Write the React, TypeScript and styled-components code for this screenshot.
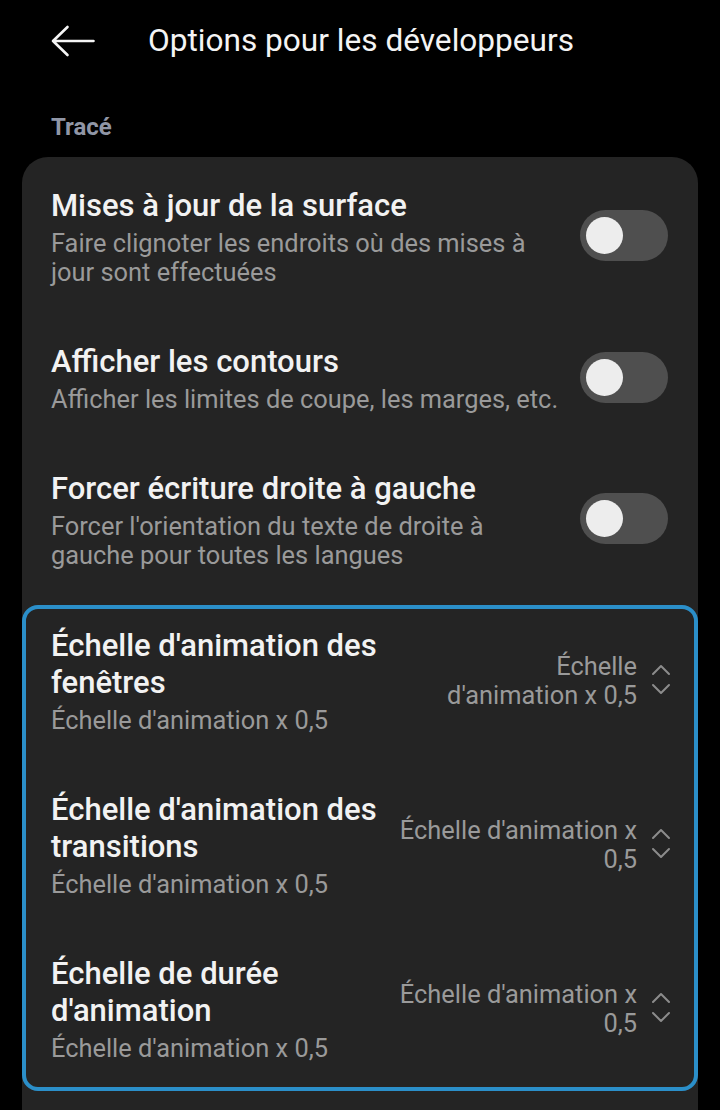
import styled, { createGlobalStyle } from 'styled-components';

const GlobalStyle = createGlobalStyle`
	html, body {
		margin: 0;
		padding: 0;
		background: #000;
		font-family: Roboto, 'Noto Sans', 'Liberation Sans', sans-serif;
		-webkit-font-smoothing: antialiased;
	}
	body {
		overflow: hidden;
	}
`;

type SwitchRow = {
	title: string;
	summary: string[];
};

type ListRow = {
	title: string[];
	summary: string;
	value: string[];
};

const switchRows: SwitchRow[] = [
	{
		title: 'Mises à jour de la surface',
		summary: ['Faire clignoter les endroits où des mises à', 'jour sont effectuées'],
	},
	{
		title: 'Afficher les contours',
		summary: ['Afficher les limites de coupe, les marges, etc.'],
	},
	{
		title: 'Forcer écriture droite à gauche',
		summary: ["Forcer l'orientation du texte de droite à", 'gauche pour toutes les langues'],
	},
];

const listRows: ListRow[] = [
	{
		title: ["Échelle d'animation des", 'fenêtres'],
		summary: "Échelle d'animation x 0,5",
		value: ['Échelle', "d'animation x 0,5"],
	},
	{
		title: ["Échelle d'animation des", 'transitions'],
		summary: "Échelle d'animation x 0,5",
		value: ["Échelle d'animation x", '0,5'],
	},
	{
		title: ['Échelle de durée', "d'animation"],
		summary: "Échelle d'animation x 0,5",
		value: ["Échelle d'animation x", '0,5'],
	},
];

const Lines = ({ lines }: { lines: string[] }) => (
	<>
		{lines.map((l, i) => (
			<span key={i}>
				{l}
				{i < lines.length - 1 && <br />}
			</span>
		))}
	</>
);

const BackArrow = () => (
	<svg width='44' height='32' viewBox='0 0 44 32' fill='none'>
		<path
			d='M2 16 H42.5 M16.5 2 L2 16 L16.5 30'
			stroke='#f4f4f4'
			strokeWidth='2.6'
			strokeLinecap='round'
			strokeLinejoin='round'
		/>
	</svg>
);

const Chevrons = () => (
	<svg width='20' height='34' viewBox='0 0 20 34' fill='none'>
		<path
			d='M2 11 L10 3 L18 11 M2 22 L10 30 L18 22'
			stroke='#8c8c8c'
			strokeWidth='2'
			strokeLinecap='round'
			strokeLinejoin='round'
		/>
	</svg>
);

const App = () => {
	return (
		<>
			<GlobalStyle />
			<Page>
				<Header>
					<BackButton>
						<BackArrow />
					</BackButton>
					<HeaderTitle>Options pour les développeurs</HeaderTitle>
				</Header>
				<SectionLabel>Tracé</SectionLabel>
				<Card>
					{switchRows.map((r) => (
						<Row key={r.title}>
							<TextColumn>
								<Title>{r.title}</Title>
								<Summary>
									<Lines lines={r.summary} />
								</Summary>
							</TextColumn>
							<Toggle>
								<Knob />
							</Toggle>
						</Row>
					))}
					<FocusGroup>
						{listRows.map((r, i) => (
							<GroupRow key={i} first={i === 0} last={i === listRows.length - 1}>
								<TextColumn>
									<Title>
										<Lines lines={r.title} />
									</Title>
									<Summary>{r.summary}</Summary>
								</TextColumn>
								<ValueWrap>
									<Value>
										<Lines lines={r.value} />
									</Value>
									<ChevronBox>
										<Chevrons />
									</ChevronBox>
								</ValueWrap>
							</GroupRow>
						))}
					</FocusGroup>
				</Card>
			</Page>
		</>
	);
};

export default App;

const Page = styled.div`
	width: 720px;
	min-height: 1110px;
	background: #000;
`;

const Header = styled.div`
	height: 82px;
	display: flex;
	align-items: center;
	padding-left: 51px;
`;

const BackButton = styled.div`
	width: 44px;
	height: 32px;
	display: flex;
	align-items: center;
`;

const HeaderTitle = styled.div`
	margin-left: 53px;
	font-size: 31.6px;
	line-height: 38px;
	color: #f4f4f4;
	font-weight: 400;
`;

const SectionLabel = styled.div`
	margin-top: 31px;
	padding-left: 51px;
	font-size: 24px;
	line-height: 28px;
	font-weight: 700;
	color: #9096a6;
`;

const Card = styled.div`
	margin: 16px 22px 0;
	padding: 2px 0 60px;
	background: #242424;
	border-radius: 26px 26px 0 0;
`;

const Row = styled.div`
	display: flex;
	align-items: center;
	padding: 28px 30px 28px 29px;
`;

const TextColumn = styled.div`
	display: flex;
	flex-direction: column;
	min-width: 0;
`;

const Title = styled.div`
	font-size: 31px;
	line-height: 37px;
	font-weight: 500;
	color: #f2f2f2;
	white-space: nowrap;
`;

const Summary = styled.div`
	margin-top: 5px;
	font-size: 25.4px;
	line-height: 29px;
	color: #9a9a9a;
	white-space: nowrap;
`;

const Toggle = styled.div`
	margin-left: auto;
	margin-top: -3px;
	flex: 0 0 auto;
	width: 88px;
	height: 51px;
	border-radius: 26px;
	background: #4f4f4f;
	display: flex;
	align-items: center;
	padding-left: 6px;
	box-sizing: border-box;
`;

const Knob = styled.div`
	width: 37px;
	height: 37px;
	border-radius: 50%;
	background: #ededed;
`;

const FocusGroup = styled.div`
	margin-top: 7px;
	border: 4px solid #2b8fc9;
	border-radius: 16px;
`;

const GroupRow = styled.div<{ first?: boolean; last?: boolean }>`
	display: flex;
	align-items: center;
	padding: ${(p) => (p.first ? '18px' : '28px')} 23px ${(p) => (p.last ? '24px' : '28px')} 25px;
`;

const ValueWrap = styled.div`
	margin-left: auto;
	display: flex;
	align-items: center;
`;

const Value = styled.div`
	text-align: right;
	font-size: 25.4px;
	line-height: 29px;
	color: #9a9a9a;
	white-space: nowrap;
`;

const ChevronBox = styled.div`
	margin-left: 14px;
	display: flex;
	align-items: center;
	margin-top: -2px;
`;
